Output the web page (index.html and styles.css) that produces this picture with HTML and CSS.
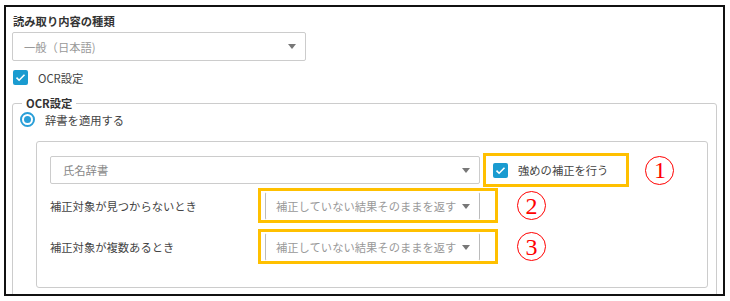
FILE: index.html
```html
<!DOCTYPE html>
<html lang="ja">
<head>
	<meta charset="UTF-8">
	<title>OCR設定</title>
	<link rel="stylesheet" href="styles.css">
</head>
<body>
	<div class="panel">
		<div class="heading">読み取り内容の種類</div>
		<div class="select select-type">
			<span class="select-text">一般（日本語)</span>
			<i class="caret"></i>
		</div>
		<label class="check-row">
			<span class="checkbox"><svg width="15" height="15" viewBox="0 0 15 15"><path d="M3.5 7.6l2.6 2.6 5.4-5.4" fill="none" stroke="#fff" stroke-width="1.6"/></svg></span>
			OCR設定
		</label>
		<fieldset class="ocr">
			<legend>OCR設定</legend>
			<div class="radio-row">
				<span class="radio"><span class="radio-dot"></span></span>
				辞書を適用する
			</div>
			<div class="dict-box">
				<div class="row row-dict">
					<div class="select select-dict">
						<span class="select-text">氏名辞書</span>
						<i class="caret"></i>
					</div>
					<div class="mark mark-strong">
						<span class="checkbox"><svg width="15" height="15" viewBox="0 0 15 15"><path d="M3.5 7.6l2.6 2.6 5.4-5.4" fill="none" stroke="#fff" stroke-width="1.6"/></svg></span>
						<span class="mark-text">強めの補正を行う</span>
					</div>
					<span class="num num-1">1</span>
				</div>
				<div class="row row-opt">
					<span class="row-label">補正対象が見つからないとき</span>
					<div class="mark mark-opt">
						<div class="select select-opt">
							<span class="select-text">補正していない結果そのままを返す</span>
							<i class="caret"></i>
						</div>
					</div>
					<span class="num">2</span>
				</div>
				<div class="row row-opt row-last">
					<span class="row-label">補正対象が複数あるとき</span>
					<div class="mark mark-opt">
						<div class="select select-opt">
							<span class="select-text">補正していない結果そのままを返す</span>
							<i class="caret"></i>
						</div>
					</div>
					<span class="num">3</span>
				</div>
			</div>
		</fieldset>
	</div>
</body>
</html>
```
FILE: styles.css
```css
html,body,div,span,fieldset,legend,label {
	margin: 0;
	padding: 0;
}
body {
	background: #fff;
	font-family: "Noto Sans CJK JP", "Noto Sans", sans-serif;
	font-size: 11.3px;
	color: #444;
}
.panel {
	box-sizing: border-box;
	width: 721px;
	height: 291px;
	margin: 5px 0 0 4px;
	padding: 0 6px;
	border: 2px solid #111;
	overflow: hidden;
}
.heading {
	margin-top: 7px;
	padding-left: 1px;
	line-height: 14px;
	font-weight: bold;
	color: #333;
}
.select {
	display: flex;
	align-items: center;
	box-sizing: border-box;
	border: 1px solid #ccc;
	border-radius: 2px;
	background: #fff;
	color: #999;
}
.select-text {
	flex: 1;
	white-space: nowrap;
}
.caret {
	width: 0;
	height: 0;
	border-left: 4px solid transparent;
	border-right: 4px solid transparent;
	border-top: 5px solid #777;
}
.select-type {
	width: 294px;
	height: 29px;
	margin-top: 4px;
	padding: 0 9px 0 11px;
}
.check-row {
	display: flex;
	align-items: center;
	height: 15px;
	margin: 9px 0 0 1px;
	color: #444;
}
.checkbox {
	display: inline-block;
	width: 15px;
	height: 15px;
	border-radius: 2px;
	background: #1a9bd0;
	margin-right: 10px;
}
.checkbox svg {
	display: block;
}
.ocr {
	margin: 11px 0 0;
	padding: 0 7px 10px;
	min-width: 0;
	border: 1px solid #ccc;
	border-radius: 3px;
}
.ocr legend {
	margin-left: 2px;
	padding: 0 4px;
	line-height: 14px;
	font-weight: bold;
	color: #333;
}
.radio-row {
	display: flex;
	align-items: center;
	height: 15px;
	margin-top: 2px;
}
.radio {
	display: flex;
	align-items: center;
	justify-content: center;
	box-sizing: border-box;
	width: 15px;
	height: 15px;
	border: 2px solid #2a9fd8;
	border-radius: 50%;
	margin-right: 10px;
}
.radio-dot {
	width: 7px;
	height: 7px;
	border-radius: 50%;
	background: #2a9fd8;
}
.dict-box {
	height: 147px;
	box-sizing: border-box;
	margin: 14px 1px 0 16px;
	padding: 11px 0 0 13px;
	border: 1px solid #ccc;
	border-radius: 3px;
}
.row {
	display: flex;
	align-items: center;
}
.select-dict {
	width: 430px;
	height: 28px;
	padding: 0 9px 0 12px;
	color: #888;
}
.mark {
	box-sizing: border-box;
	border: 3px solid #ffc000;
}
.mark-strong {
	display: flex;
	align-items: center;
	height: 34px;
	margin-left: 3px;
	padding: 0 18px 0 7px;
	color: #444;
}
.mark-strong .checkbox {
	margin-right: 10px;
}
.row-opt {
	margin-top: 1px;
}
.row-last {
	margin-top: 6px;
}
.row-label {
	width: 208px;
}
.mark-opt {
	width: 240px;
	height: 35px;
	padding: 1px 15px 0 4px;
}
.select-opt {
	height: 28px;
	padding: 0 9px 0 10px;
	border-top-color: #fff;
	border-bottom-color: #fff;
	border-left-color: #bbb;
	border-right-color: #bbb;
}
.num {
	display: flex;
	align-items: center;
	justify-content: center;
	box-sizing: border-box;
	width: 29px;
	height: 29px;
	margin-left: 19px;
	border: 1.5px solid #f00;
	border-radius: 50%;
	font-family: "Liberation Serif", serif;
	font-size: 24px;
	line-height: 1;
	color: #f00;
}
.num-1 {
	margin-left: 16px;
}
```
